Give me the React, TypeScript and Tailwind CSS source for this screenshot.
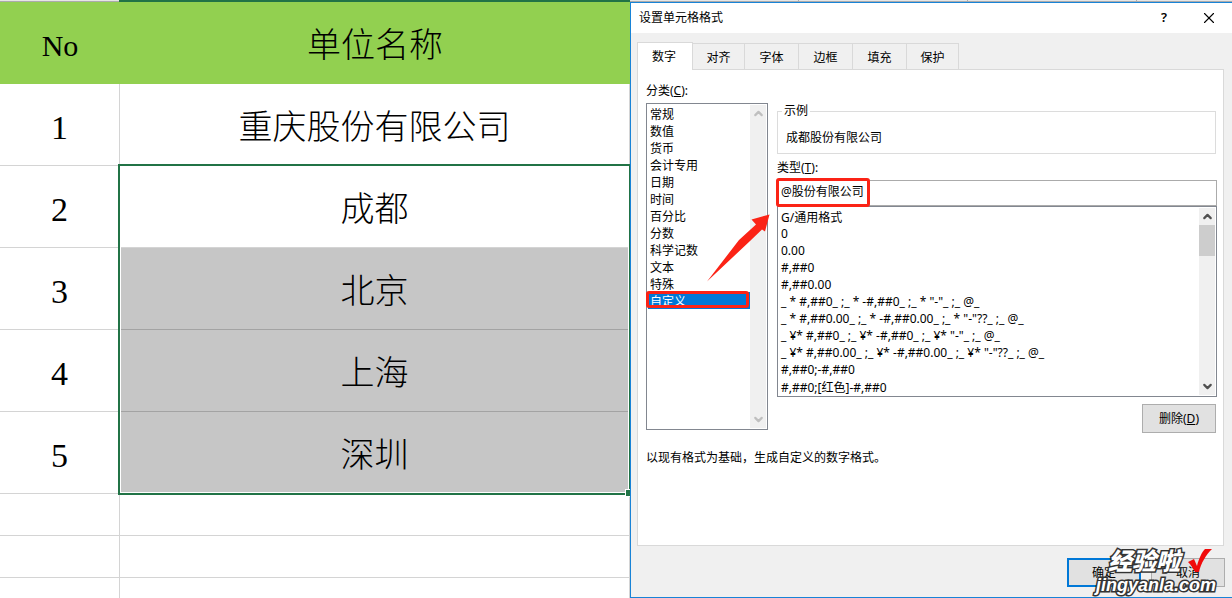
import { ChevronDown, ChevronUp, X } from 'lucide-react';

interface SheetRow {
  no: string;
  name: string;
  selected?: boolean;
}

const rows: SheetRow[] = [
  { no: '1', name: '重庆股份有限公司' },
  { no: '2', name: '成都' },
  { no: '3', name: '北京', selected: true },
  { no: '4', name: '上海', selected: true },
  { no: '5', name: '深圳', selected: true },
];

const tabs = ['数字', '对齐', '字体', '边框', '填充', '保护'];

const categories = [
  '常规', '数值', '货币', '会计专用', '日期', '时间',
  '百分比', '分数', '科学记数', '文本', '特殊', '自定义',
];

const formats = [
  'G/通用格式',
  '0',
  '0.00',
  '#,##0',
  '#,##0.00',
  '_ * #,##0_ ;_ * -#,##0_ ;_ * "-"_ ;_ @_ ',
  '_ * #,##0.00_ ;_ * -#,##0.00_ ;_ * "-"??_ ;_ @_ ',
  '_ ¥* #,##0_ ;_ ¥* -#,##0_ ;_ ¥* "-"_ ;_ @_ ',
  '_ ¥* #,##0.00_ ;_ ¥* -#,##0.00_ ;_ ¥* "-"??_ ;_ @_ ',
  '#,##0;-#,##0',
  '#,##0;[红色]-#,##0',
];

function ColumnEdge() {
  return (
    <div className="flex h-0.5 shrink-0">
      <div className="w-[119px] border-b border-[#ababab] bg-[#e6e6e6]" />
      <div className="flex-1 bg-[#217346]" />
      <div className="flex w-[602px] border-b border-[#ababab] bg-[#e6e6e6]">
        <div className="w-[169px] border-r border-[#ababab]" />
        <div className="w-[169px] border-r border-[#ababab]" />
        <div className="w-[169px] border-r border-[#ababab]" />
      </div>
    </div>
  );
}

function Sheet() {
  return (
    <div className="relative flex-1 bg-white font-['Liberation_Serif','Noto_Sans_CJK_SC',serif] text-black">
      <table className="w-full table-fixed border-separate border-spacing-0 text-center text-[34px] leading-10 font-light">
        <colgroup>
          <col className="w-[120px]" />
          <col />
        </colgroup>
        <thead>
          <tr className="h-[82px] bg-[#92d050]">
            <th className="p-0 pt-1.5 text-3xl font-light">No</th>
            <th className="p-0 pt-1.5 font-light">单位名称</th>
          </tr>
        </thead>
        <tbody>
          {rows.map((row) => (
            <tr key={row.no} className="h-[82px]">
              <td className="border-r border-b border-[#d4d4d4] p-0 pt-1.5">{row.no}</td>
              <td
                className={
                  row.selected
                    ? 'border-r border-b border-[#a3a3a3] bg-[#c6c6c6] p-0 pt-1.5'
                    : 'border-r border-b border-[#d4d4d4] p-0 pt-1.5'
                }
              >
                {row.name}
              </td>
            </tr>
          ))}
          <tr className="h-[42px]">
            <td className="border-r border-b border-[#d4d4d4] p-0" />
            <td className="border-r border-b border-[#d4d4d4] p-0" />
          </tr>
          <tr className="h-[42px]">
            <td className="border-r border-b border-[#d4d4d4] p-0" />
            <td className="border-r border-b border-[#d4d4d4] p-0" />
          </tr>
          <tr className="h-5">
            <td className="border-r border-[#d4d4d4] p-0" />
            <td className="border-r border-[#d4d4d4] p-0" />
          </tr>
        </tbody>
      </table>

      {/* Selection frame and fill handle */}
      <div className="absolute top-[162px] -right-px left-[118px] h-[331px] border-2 border-[#217346]">
        <div className="h-full border border-white" />
        <div className="absolute -right-1 -bottom-1 size-2 border border-white bg-[#217346]" />
      </div>
    </div>
  );
}

function TitleBar() {
  return (
    <div className="flex h-[30px] items-center bg-white pr-3.5 pl-2">
      <h1 className="flex-1">设置单元格格式</h1>
      <button type="button" aria-label="帮助" className="w-4 text-[13px] font-semibold">?</button>
      <button type="button" aria-label="关闭" className="ml-7 flex size-[18px] items-center justify-center">
        <X size={18} strokeWidth={1.5} />
      </button>
    </div>
  );
}

function TabStrip() {
  return (
    <div role="tablist" className="mt-2 flex h-7 items-end">
      {tabs.map((tab, i) =>
        i === 0 ? (
          <button
            key={tab}
            type="button"
            role="tab"
            aria-selected="true"
            className="z-10 -mb-px h-7 w-14 border border-b-0 border-[#d9d9d9] bg-white pr-0.5"
          >
            {tab}
          </button>
        ) : (
          <button
            key={tab}
            type="button"
            role="tab"
            aria-selected="false"
            className="h-[26px] w-[54px] border-t border-r border-[#d9d9d9] pt-0.5 last:w-[52px] nth-2:w-[52px]"
          >
            {tab}
          </button>
        ),
      )}
    </div>
  );
}

function CategoryList() {
  return (
    <div className="flex flex-col">
      <label htmlFor="category">
        分类(<u>C</u>):
      </label>
      <div className="relative mt-1 flex h-[327px] border border-[#828790] p-px">
        <select
          id="category"
          size={12}
          defaultValue="自定义"
          className="h-[204px] min-w-0 flex-1 appearance-none overflow-hidden outline-none"
        >
          {categories.map((name) => (
            <option
              key={name}
              className="h-[17px] min-h-0 p-0 pl-0.5 leading-[15px] checked:bg-[#0078d7] checked:bg-[linear-gradient(#0078d7,#0078d7)] checked:text-white"
            >
              {name}
            </option>
          ))}
        </select>
        <div className="flex w-4 flex-col items-center justify-between bg-[#f0f0f0] py-0.5 text-[#bfbfbf]">
          <ChevronUp size={13} strokeWidth={4} />
          <ChevronDown size={13} strokeWidth={4} />
        </div>
        {/* Red mark round the chosen category */}
        <div className="pointer-events-none absolute top-[187px] -left-px h-[17px] w-[103px] rounded-[3px] border-3 border-[#fb2316]" />
      </div>
    </div>
  );
}

function FormatEditor() {
  return (
    <div className="flex min-w-0 flex-col">
      <fieldset className="mt-5 mr-px h-[51px] border border-[#dcdcdc] pl-2">
        <legend className="-ml-1 px-0.5">示例</legend>
        <p className="mt-[11px]">成都股份有限公司</p>
      </fieldset>

      <label htmlFor="format" className="mt-1.5">
        类型(<u>T</u>):
      </label>
      <div className="relative mt-1 flex">
        <input
          id="format"
          type="text"
          defaultValue="@股份有限公司"
          className="h-[26px] flex-1 border border-[#ababab] pb-1 pl-[3px] outline-none"
        />
        <div className="pointer-events-none absolute -top-0.5 -left-px h-[29px] w-[94px] rounded-[3px] border-3 border-[#fb2316]" />
      </div>

      <div className="flex h-[191px] border border-[#828790] p-px">
        <select
          aria-label="格式代码"
          size={11}
          className="h-[187px] min-w-0 flex-1 appearance-none overflow-hidden outline-none"
        >
          {formats.map((code) => (
            <option key={code} className="h-[17px] min-h-0 p-0 pl-0.5 leading-4">
              {code}
            </option>
          ))}
        </select>
        <div className="flex w-4 flex-col items-center bg-[#f0f0f0] py-0.5 text-[#505050]">
          <ChevronUp size={13} strokeWidth={4} />
          <div className="mt-0.5 h-[31px] w-full bg-[#cdcdcd]" />
          <ChevronDown size={13} strokeWidth={4} className="mt-auto" />
        </div>
      </div>

      <button
        type="button"
        className="mt-[7px] mr-px h-[29px] w-[74px] self-end border border-[#adadad] bg-[#e1e1e1]"
      >
        删除(<u>D</u>)
      </button>
    </div>
  );
}

function Watermark() {
  return (
    <div className="pointer-events-none absolute right-4 bottom-0 flex flex-col items-end text-white [-webkit-text-stroke:3px_#333] [paint-order:stroke_fill]">
      <div className="flex items-center gap-2 pr-1">
        <span className="text-2xl leading-6 font-black italic">经验啦</span>
        <svg width="24" height="24" viewBox="0 0 24 24" fill="#f00a0a">
          <path d="M0 13 L6 10 L9 17 C11 9 14 3 17 0 L24 0 C18 6 13 14 11 23 L7 23 C5 19 3 16 0 13Z" />
        </svg>
      </div>
      <span className="font-['Liberation_Sans',sans-serif] text-lg leading-6 font-bold italic">
        jingyanla.com
      </span>
    </div>
  );
}

function FormatDialog() {
  return (
    <section
      role="dialog"
      aria-label="设置单元格格式"
      className="relative flex w-[602px] shrink-0 flex-col border-t border-b border-l border-[#1883d7] bg-[#f0f0f0] font-['Noto_Sans','Noto_Sans_CJK_SC',sans-serif] text-xs text-black"
    >
      <TitleBar />
      <div className="flex flex-1 flex-col pr-2 pl-1.5">
        <TabStrip />
        <div className="relative flex-1 border border-[#d9d9d9] bg-white pt-[13px] pr-1.5 pl-2">
          <div className="grid grid-cols-[122px_1fr] gap-[9px]">
            <CategoryList />
            <FormatEditor />
          </div>
          <p className="mt-[17px]">以现有格式为基础，生成自定义的数字格式。</p>

          {/* Arrow from the category to the format box */}
          <svg
            className="pointer-events-none absolute top-36 left-[68px]"
            width="64"
            height="68"
            viewBox="706 214 64 68"
            fill="#fb2316"
          >
            <path d="M707 281.5 L739 240 L756 224.5 L751.5 219.5 L769.5 214.5 L765 231.5 L762 229.5 L750 241Z" />
          </svg>
        </div>
      </div>
      <div className="flex justify-end gap-2.5 pt-3 pr-[7px] pb-2.5">
        <button type="button" className="h-[29px] w-[74px] border-2 border-[#0078d7] bg-[#e1e1e1]">
          确定
        </button>
        <button type="button" className="h-[29px] w-[74px] border border-[#adadad] bg-[#e1e1e1]">
          取消
        </button>
      </div>
      <Watermark />
    </section>
  );
}

export default function App() {
  return (
    <div className="flex min-h-screen flex-col bg-white">
      <ColumnEdge />
      <div className="flex flex-1">
        <Sheet />
        <FormatDialog />
      </div>
    </div>
  );
}
